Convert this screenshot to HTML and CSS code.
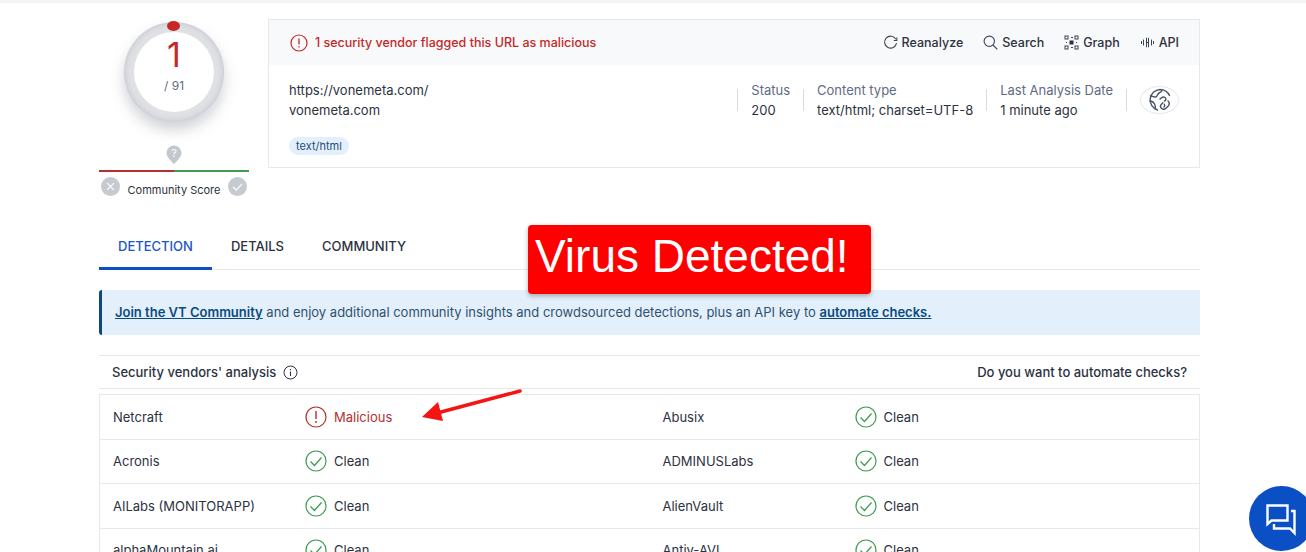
FILE: index.html
```html
<!DOCTYPE html>
<html lang="en">
<head>
<meta charset="utf-8">
<title>VirusTotal - URL</title>
<link rel="stylesheet" href="styles.css">
</head>
<body>
<div class="topstrip"></div>
<main class="page">
  <section class="summary">
    <aside class="score">
      <div class="gauge">
        <div class="gauge-dot"></div>
        <div class="gauge-face">
          <span class="gauge-num">1</span>
          <span class="gauge-total">/ 91</span>
        </div>
      </div>
      <svg class="pin" width="16" height="20" viewBox="0 0 16 20"><path d="M8 19.5C6 16.5.5 12.500.5 8a7.500 7.500 0 0 1 15 0c0 4.500-5.500 8.500-7.500 11.500z" fill="#c3c7cf"/><text x="8" y="11.500" text-anchor="middle" class="pin-q">?</text></svg>
      <div class="score-bar"><span class="bar-red"></span><span class="bar-green"></span></div>
      <div class="score-row">
        <svg width="19" height="19" viewBox="0 0 19 19"><circle cx="9.500" cy="9.500" r="9.500" fill="#c6cad1"/><path d="M6.200 6.200l6.600 6.600M12.800 6.200l-6.600 6.600" stroke="#fff" stroke-width="1.200" fill="none"/></svg>
        <span class="score-label">Community Score</span>
        <svg width="19" height="19" viewBox="0 0 19 19"><circle cx="9.500" cy="9.500" r="9.500" fill="#c6cad1"/><path d="M5 10l3.200 3.200L14.200 6.800" stroke="#fff" stroke-width="1.200" fill="none"/></svg>
      </div>
    </aside>
    <div class="card">
      <header class="card-head">
        <div class="alert">
          <svg class="alert-icon" width="18" height="18" viewBox="0 0 18 18"><circle cx="9" cy="9" r="8" fill="none" stroke="#c62828" stroke-width="1.200"/><path d="M9 4.500v6M9 12.200v1.300" stroke="#c62828" stroke-width="1.300" fill="none"/></svg>
          <span>1 security vendor flagged this URL as malicious</span>
        </div>
        <nav class="actions">
          <a class="action"><svg width="15" height="15" viewBox="0 0 15 15"><path d="M12.800 4.200A6 6 0 1 0 13.500 8" fill="none" stroke="#3c4352" stroke-width="1.100"/><path d="M13.800 2.500v3h-3" fill="none" stroke="#3c4352" stroke-width="1.100"/></svg>Reanalyze</a>
          <a class="action"><svg width="15" height="15" viewBox="0 0 15 15"><circle cx="6.300" cy="6.300" r="5.200" fill="none" stroke="#3c4352" stroke-width="1.100"/><path d="M10 10l4.300 4.300" stroke="#3c4352" stroke-width="1.100"/></svg>Search</a>
          <a class="action"><svg width="15" height="15" viewBox="0 0 15 15"><g fill="none" stroke="#3c4352" stroke-width="1"><rect x="1" y="1" width="3" height="3"/><rect x="11" y="1" width="3" height="3"/><rect x="1" y="11" width="3" height="3"/><rect x="11" y="11" width="3" height="3"/></g><rect x="5.500" y="5.500" width="4" height="4" fill="#2c3240"/><path d="M7 2.500h2M2.500 7v1M12.500 7v1M7 12.500h2" stroke="#3c4352"/></svg>Graph</a>
          <a class="action"><svg width="15" height="15" viewBox="0 0 15 15"><g fill="none" stroke="#3c4352" stroke-width="1"><path d="M3.500 4.500v6M1.500 6v3M6 3h.5v9H6M9 3h-.5v9H9M11.500 4.500v6M13.500 6v3M6.500 7.500h2"/></g></svg>API</a>
        </nav>
      </header>
      <div class="card-body">
        <div class="url-block">
          <div class="url-line">https://vonemeta.com/</div>
          <div class="url-line">vonemeta.com</div>
          <span class="tag">text/html</span>
        </div>
        <div class="meta">
          <div class="meta-item"><div class="meta-key">Status</div><div class="meta-val">200</div></div>
          <div class="meta-item"><div class="meta-key">Content type</div><div class="meta-val">text/html; charset=UTF-8</div></div>
          <div class="meta-item"><div class="meta-key">Last Analysis Date</div><div class="meta-val">1 minute ago</div></div>
          <div class="meta-item meta-icon">
            <div class="globe"><svg width="26" height="26" viewBox="0 0 26 26"><g fill="none" stroke="#4a5468" stroke-width="1.400" stroke-linecap="round"><path d="M10.500 23A10.500 10.500 0 0 1 13 2.500c4 0 8 2.500 9.500 6"/><path d="M3.500 9c2.500 0 3 1 5 1s1.500-3 3.500-4 3-2 3-2.700M3 14c2 0 3.500 1 4.500 3s1 3 1 5"/><path d="M13 12c1-1 3-3 5-1.500 1.500 1.200 1 3-.5 3.500M21 14c1.500 1.500 1.500 3.500.2 5l-2 2c-1.500 1.500-3.500 1.500-4.800.2-1.300-1.400-1-3 0-4l1.500-1.500M17 20c1-1 1-2 .3-2.800"/></g></svg></div>
          </div>
        </div>
      </div>
    </div>
  </section>

  <nav class="tabs">
    <a class="tab tab-active">DETECTION</a>
    <a class="tab">DETAILS</a>
    <a class="tab">COMMUNITY</a>
  </nav>

  <div class="banner"><a class="banner-link">Join the VT Community</a> and enjoy additional community insights and crowdsourced detections, plus an API key to <a class="banner-link">automate checks.</a></div>

  <div class="section-head">
    <div class="section-title">Security vendors' analysis
      <svg width="15" height="15" viewBox="0 0 15 15"><circle cx="7.500" cy="7.500" r="6.500" fill="none" stroke="#2c3240" stroke-width="1"/><path d="M7.500 6.500v4.500M7.500 4v1.300" stroke="#2c3240" stroke-width="1.100"/></svg>
    </div>
    <div class="section-title">Do you want to automate checks?</div>
  </div>

  <div class="vendors">
    <div class="vendor"><span class="v-name">Netcraft</span><span class="v-res v-bad"><svg width="22" height="22" viewBox="0 0 22 22"><circle cx="11" cy="11" r="10" fill="none" stroke="#b3302f" stroke-width="1.200"/><path d="M11 5v8M11 15v2" stroke="#b3302f" stroke-width="1.400"/></svg>Malicious</span></div>
    <div class="vendor"><span class="v-name">Abusix</span><span class="v-res"><svg width="22" height="22" viewBox="0 0 22 22"><circle cx="11" cy="11" r="10" fill="none" stroke="#3f9b52" stroke-width="1.200"/><path d="M5.500 11.500l4 4 7-8" fill="none" stroke="#3f9b52" stroke-width="1.300"/></svg>Clean</span></div>
    <div class="vendor"><span class="v-name">Acronis</span><span class="v-res"><svg width="22" height="22" viewBox="0 0 22 22"><circle cx="11" cy="11" r="10" fill="none" stroke="#3f9b52" stroke-width="1.200"/><path d="M5.500 11.500l4 4 7-8" fill="none" stroke="#3f9b52" stroke-width="1.300"/></svg>Clean</span></div>
    <div class="vendor"><span class="v-name">ADMINUSLabs</span><span class="v-res"><svg width="22" height="22" viewBox="0 0 22 22"><circle cx="11" cy="11" r="10" fill="none" stroke="#3f9b52" stroke-width="1.200"/><path d="M5.500 11.500l4 4 7-8" fill="none" stroke="#3f9b52" stroke-width="1.300"/></svg>Clean</span></div>
    <div class="vendor"><span class="v-name">AILabs (MONITORAPP)</span><span class="v-res"><svg width="22" height="22" viewBox="0 0 22 22"><circle cx="11" cy="11" r="10" fill="none" stroke="#3f9b52" stroke-width="1.200"/><path d="M5.500 11.500l4 4 7-8" fill="none" stroke="#3f9b52" stroke-width="1.300"/></svg>Clean</span></div>
    <div class="vendor"><span class="v-name">AlienVault</span><span class="v-res"><svg width="22" height="22" viewBox="0 0 22 22"><circle cx="11" cy="11" r="10" fill="none" stroke="#3f9b52" stroke-width="1.200"/><path d="M5.500 11.500l4 4 7-8" fill="none" stroke="#3f9b52" stroke-width="1.300"/></svg>Clean</span></div>
    <div class="vendor"><span class="v-name">alphaMountain.ai</span><span class="v-res"><svg width="22" height="22" viewBox="0 0 22 22"><circle cx="11" cy="11" r="10" fill="none" stroke="#3f9b52" stroke-width="1.200"/><path d="M5.500 11.500l4 4 7-8" fill="none" stroke="#3f9b52" stroke-width="1.300"/></svg>Clean</span></div>
    <div class="vendor"><span class="v-name">Antiy-AVL</span><span class="v-res"><svg width="22" height="22" viewBox="0 0 22 22"><circle cx="11" cy="11" r="10" fill="none" stroke="#3f9b52" stroke-width="1.200"/><path d="M5.500 11.500l4 4 7-8" fill="none" stroke="#3f9b52" stroke-width="1.300"/></svg>Clean</span></div>
  </div>
</main>

<div class="virus-label">Virus Detected!</div>
<svg class="arrow" width="104" height="34" viewBox="0 0 104 34"><path d="M99 3L20 24" stroke="#f41414" stroke-width="3.500" stroke-linecap="round" fill="none"/><path d="M1 29L17 14l5 19z" fill="#f41414"/></svg>
<div class="chat"><svg width="34" height="34" viewBox="0 0 34 34"><path d="M3.500 3.500h20v15h-16l-4 3.500z" fill="none" stroke="#fff" stroke-width="2.400"/><path d="M27 9h3.500v22l-4.500-4.500H10V22" fill="none" stroke="#fff" stroke-width="2.400"/></svg></div>
</body>
</html>
```
FILE: styles.css
```css
* { box-sizing: border-box; }
html, body { margin: 0; height: 552px; overflow: hidden; background: #fff; }
body { position: relative; font-family: Inter, "Liberation Sans", sans-serif; font-size: 13px; color: #2c3240; }
.topstrip { height: 3px; background: #f4f5f6; }
.page { width: 1101px; margin-left: 99px; }

.summary { display: flex; gap: 19px; padding-top: 16px; height: 222px; }
.score { width: 150px; display: flex; flex-direction: column; align-items: center; }
.gauge { position: relative; width: 100px; height: 100px; border-radius: 50%; background: #dfe1e5; box-shadow: 0 8px 14px rgba(90,95,110,.28), inset 0 0 6px rgba(90,95,110,.25); display: flex; align-items: center; justify-content: center; margin-top: 3px; }
.gauge-dot { position: absolute; top: -1px; left: 43px; width: 13px; height: 10px; border-radius: 50%; background: #c62828; z-index: 1; }
.gauge-face { width: 80px; height: 80px; border-radius: 50%; background: #fff; display: flex; flex-direction: column; align-items: center; }
.gauge-num { font-size: 34px; line-height: 40px; margin-top: 3px; color: #c62828; font-weight: 400; }
.gauge-total { font-size: 12px; line-height: 16px; margin-top: 3px; color: #5f6b82; }
.pin { margin-top: 23px; }
.pin-q { font-size: 11px; fill: #fff; font-family: Inter, sans-serif; }
.score-bar { width: 150px; height: 2px; display: flex; margin-top: 5px; }
.bar-red { flex: 1; background: #b3302f; }
.bar-green { flex: 1; background: #3f9b52; }
.score-row { width: 150px; display: flex; justify-content: space-between; align-items: center; padding: 4px 2px 0; }
.score-label { font-size: 11px; margin-top: 7px; color: #2c3240; }

.card { flex: 1; height: 149px; border: 1px solid #e6e8ec; display: flex; flex-direction: column; }
.card-head { height: 45px; background: #f8f9fb; display: flex; align-items: center; justify-content: space-between; padding: 0 20px 0 21px; }
.alert { display: flex; align-items: center; gap: 7px; color: #c62828; font-weight: 500; font-size: 12.500px; }
.actions { display: flex; gap: 20px; }
.action { display: flex; align-items: center; gap: 4px; font-weight: 500; font-size: 12.500px; color: #2c3240; }
.card-body { flex: 1; display: flex; justify-content: space-between; padding: 15px 20px 0; }
.url-line { line-height: 20px; font-size: 13px; }
.tag { display: inline-block; margin-top: 17px; padding: 0 7px; height: 18px; line-height: 18px; border-radius: 9px; background: #e3f0fb; color: #274b7a; font-size: 11px; }
.meta { display: flex; height: 40px; align-items: center; }
.meta-item { padding: 0 13px; border-left: 1px solid #d9dce2; height: 22px; display: flex; flex-direction: column; justify-content: center; }
.meta-key { color: #5f6b82; line-height: 20px; }
.meta-val { line-height: 20px; }
.meta-icon { padding-right: 0; }
.globe { width: 39px; height: 39px; border: 1px solid #e6e8ec; border-radius: 50%; display: flex; align-items: center; justify-content: center; }

.tabs { display: flex; height: 45px; border-bottom: 1px solid #e6e8ec; margin-top: 0; }
.tab { padding: 0 19px; line-height: 43px; height: 45px; font-weight: 500; font-size: 13px; color: #2c3240; }
.tab-active { color: #1a56c4; border-bottom: 3px solid #0b4fc4; }

.banner { margin-top: 20px; height: 45px; line-height: 44px; background: #e3f0fb; border-left: 3px solid #0a4a80; border-radius: 3px 0 0 3px; padding-left: 13px; color: #30506f; font-size: 13px; }
.banner-link { color: #0a4a80; font-weight: 600; text-decoration: underline; }

.section-head { margin-top: 20px; height: 34px; border-top: 1px solid #e6e8ec; border-bottom: 1px solid #e6e8ec; display: flex; justify-content: space-between; align-items: center; padding: 0 13px; }
.section-title { font-weight: 500; font-size: 13px; display: flex; align-items: center; gap: 7px; }

.vendors { margin-top: 5px; border: 1px solid #e6e8ec; display: grid; grid-template-columns: 1fr 1fr; }
.vendor { height: 44.500px; border-bottom: 1px solid #e6e8ec; display: flex; align-items: center; padding-left: 13px; }
.v-name { width: 192px; }
.v-res { display: flex; align-items: center; gap: 7px; }
.v-bad { color: #b3302f; }

.virus-label { position: absolute; left: 528px; top: 225px; width: 343px; height: 69px; background: #ff0000; color: #fff; border-radius: 4px; box-shadow: 0 2px 5px rgba(0,0,0,.3); font-family: "Liberation Sans", sans-serif; font-size: 46px; line-height: 62px; padding-left: 7px; white-space: nowrap; }
.arrow { position: absolute; left: 421px; top: 388px; }
.chat { position: absolute; left: 1249px; top: 486px; width: 65px; height: 65px; border-radius: 50%; background: #0b4fc4; display: flex; align-items: center; justify-content: center; padding-right: 2px; }
```
